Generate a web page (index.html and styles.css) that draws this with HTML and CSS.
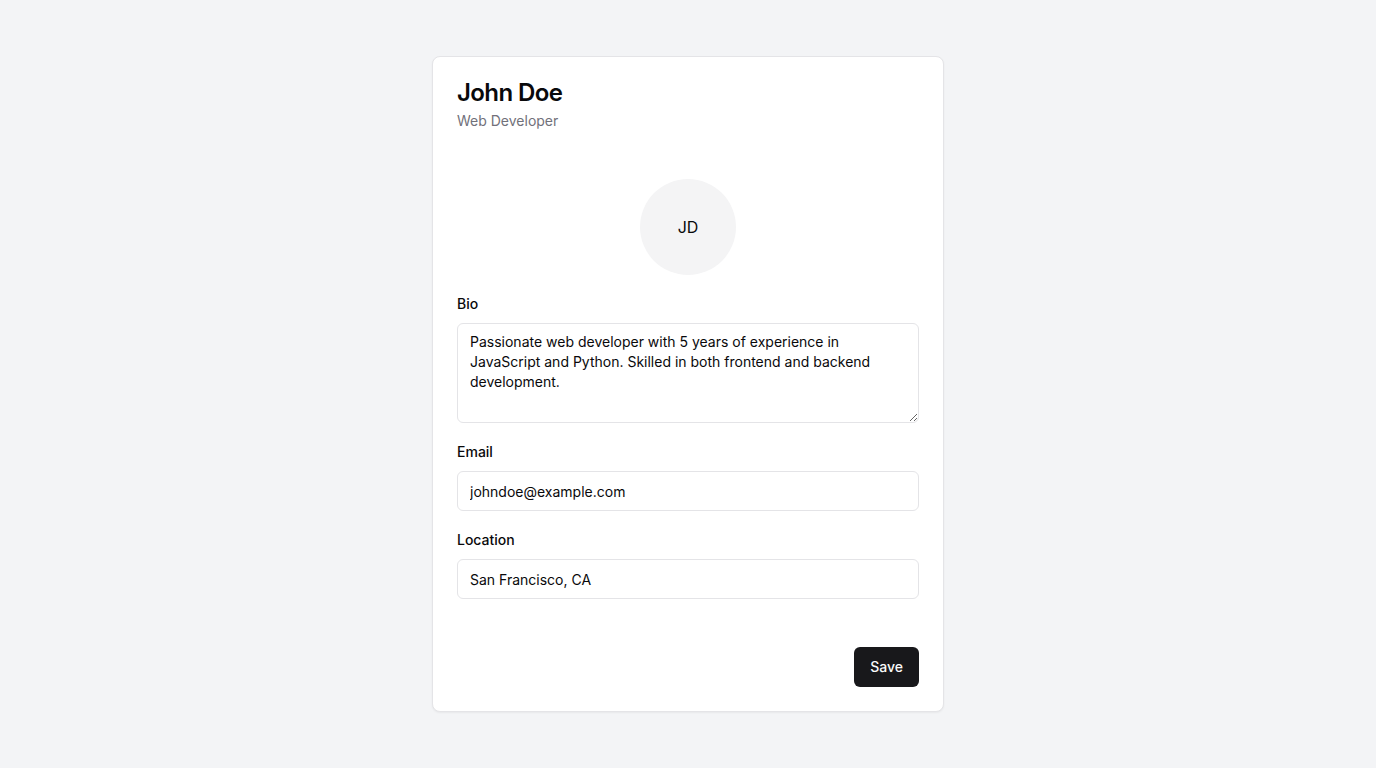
FILE: index.html
```html
<!DOCTYPE html>
<html lang="en">
<head>
<meta charset="utf-8">
<title>Profile</title>
<link rel="stylesheet" href="styles.css">
</head>
<body>
<main class="page">
  <section class="card">
    <header class="card-header">
      <h1 class="card-title">John Doe</h1>
      <p class="card-desc">Web Developer</p>
    </header>
    <div class="card-content">
      <div class="avatar-row">
        <div class="avatar">JD</div>
      </div>
      <div class="field">
        <label class="label" for="bio">Bio</label>
        <textarea id="bio" class="textarea">Passionate web developer with 5 years of experience in JavaScript and Python. Skilled in both frontend and backend development.</textarea>
      </div>
      <div class="field">
        <label class="label" for="email">Email</label>
        <input id="email" class="input" type="email" value="johndoe@example.com">
      </div>
      <div class="field">
        <label class="label" for="location">Location</label>
        <input id="location" class="input" type="text" value="San Francisco, CA">
      </div>
    </div>
    <footer class="card-footer">
      <button class="btn" type="button">Save</button>
    </footer>
  </section>
</main>
</body>
</html>
```
FILE: styles.css
```css
* {
  box-sizing: border-box;
}

html, body {
  margin: 0;
  padding: 0;
}

body {
  font-family: Inter, "Liberation Sans", sans-serif;
  font-size: 16px;
  line-height: 1.5;
  color: #09090b;
  background: #f3f4f6;
}

.page {
  min-height: 100vh;
  display: flex;
  align-items: center;
  justify-content: center;
}

.card {
  width: 512px;
  background: #ffffff;
  border: 1px solid #e4e4e7;
  border-radius: 8px;
  box-shadow: 0 1px 2px rgba(0, 0, 0, 0.05);
}

.card-header {
  padding: 24px;
  display: flex;
  flex-direction: column;
  gap: 6px;
}

.card-title {
  margin: 0;
  font-size: 24px;
  line-height: 1;
  font-weight: 600;
  letter-spacing: -0.6px;
  color: #09090b;
}

.card-desc {
  margin: 0;
  font-size: 14px;
  line-height: 20px;
  color: #71717a;
}

.card-content {
  padding: 24px;
  display: flex;
  flex-direction: column;
  gap: 16px;
}

.avatar-row {
  display: flex;
  justify-content: center;
}

.avatar {
  width: 96px;
  height: 96px;
  border-radius: 50%;
  background: #f4f4f5;
  display: flex;
  align-items: center;
  justify-content: center;
  font-size: 16px;
  color: #09090b;
}

.field {
  display: flex;
  flex-direction: column;
}

.label {
  display: block;
  height: 24px;
  font-size: 14px;
  line-height: 25px;
  font-weight: 500;
  color: #09090b;
}

.input,
.textarea {
  display: block;
  width: 100%;
  margin: 8px 0 0;
  border: 1px solid #e4e4e7;
  border-radius: 6px;
  background: #ffffff;
  font-family: Inter, "Liberation Sans", sans-serif;
  font-size: 14px;
  line-height: 20px;
  color: #09090b;
  padding: 8px 12px;
  outline: none;
}

.input {
  height: 40px;
}

.textarea {
  height: 100px;
  resize: vertical;
}

.card-footer {
  padding: 24px;
  display: flex;
  justify-content: flex-end;
}

.btn {
  height: 40px;
  padding: 0 16px;
  border: none;
  border-radius: 6px;
  background: #18181b;
  color: #fafafa;
  font-family: Inter, "Liberation Sans", sans-serif;
  font-size: 14px;
  font-weight: 500;
  line-height: 20px;
  cursor: pointer;
}
```
